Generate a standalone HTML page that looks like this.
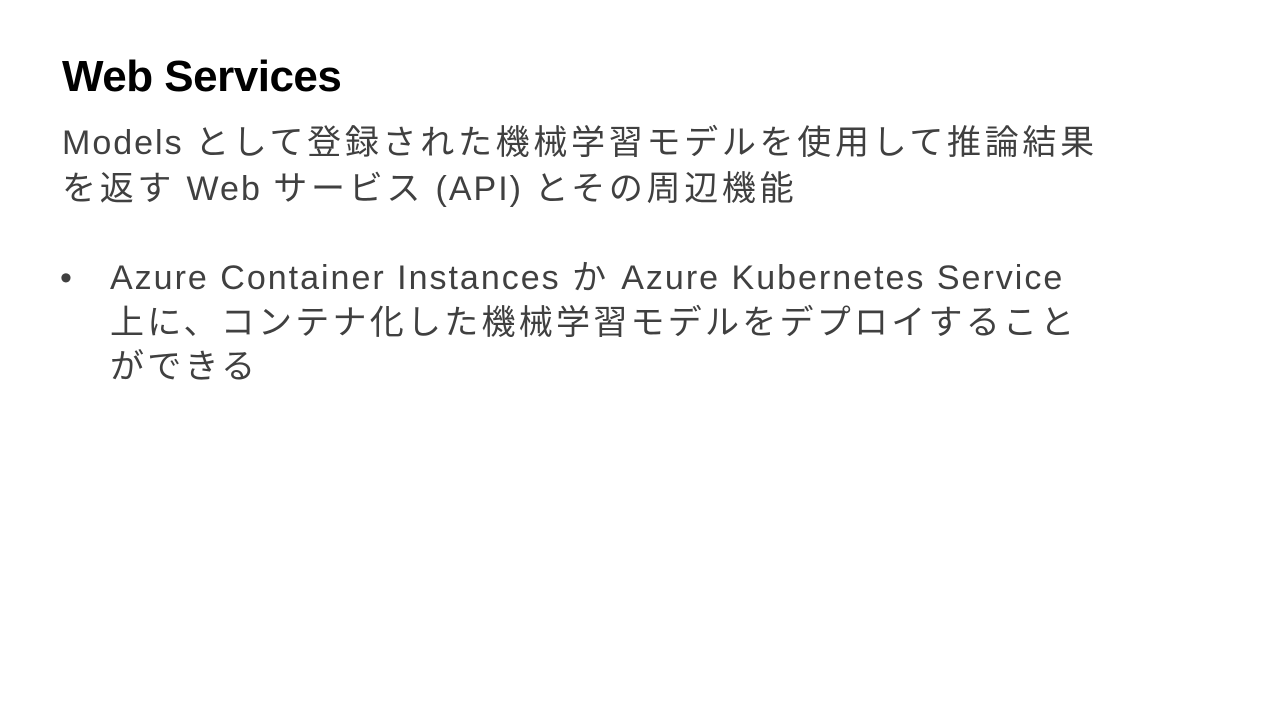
<!DOCTYPE html>
<html><head><meta charset="utf-8"><style>
body{margin:0;width:1280px;height:720px;background:#fff;overflow:hidden;font-family:"Liberation Sans","Noto Sans CJK JP",sans-serif;}
.t{position:absolute;left:62px;top:52px;font-size:44px;font-weight:bold;color:#000;letter-spacing:-0.5px;}
.s{position:absolute;left:62px;top:120px;font-size:34px;line-height:46px;color:#404040;letter-spacing:2px;white-space:nowrap;}
.b{position:absolute;left:110px;top:256px;font-size:34px;line-height:44.5px;color:#404040;letter-spacing:2px;white-space:nowrap;}
.d{position:absolute;left:60px;top:256px;font-size:34px;line-height:44px;color:#404040;}
.j{letter-spacing:3.7px;}
.k{letter-spacing:3.25px;}
</style></head><body>
<div class="t">Web Services</div>
<div class="s">Models <span class="j">として登録された機械学習モデルを使用して推論結果</span><br><span class="j">を返す</span> Web <span class="j">サービス</span> (API) <span class="j">とその周辺機能</span></div>
<div class="d">•</div>
<div class="b">Azure Container Instances <span class="j">か</span> Azure Kubernetes Service<br><span class="k">上に、コンテナ化した機械学習モデルをデプロイすること</span><br><span class="k">ができる</span></div>
</body></html>
